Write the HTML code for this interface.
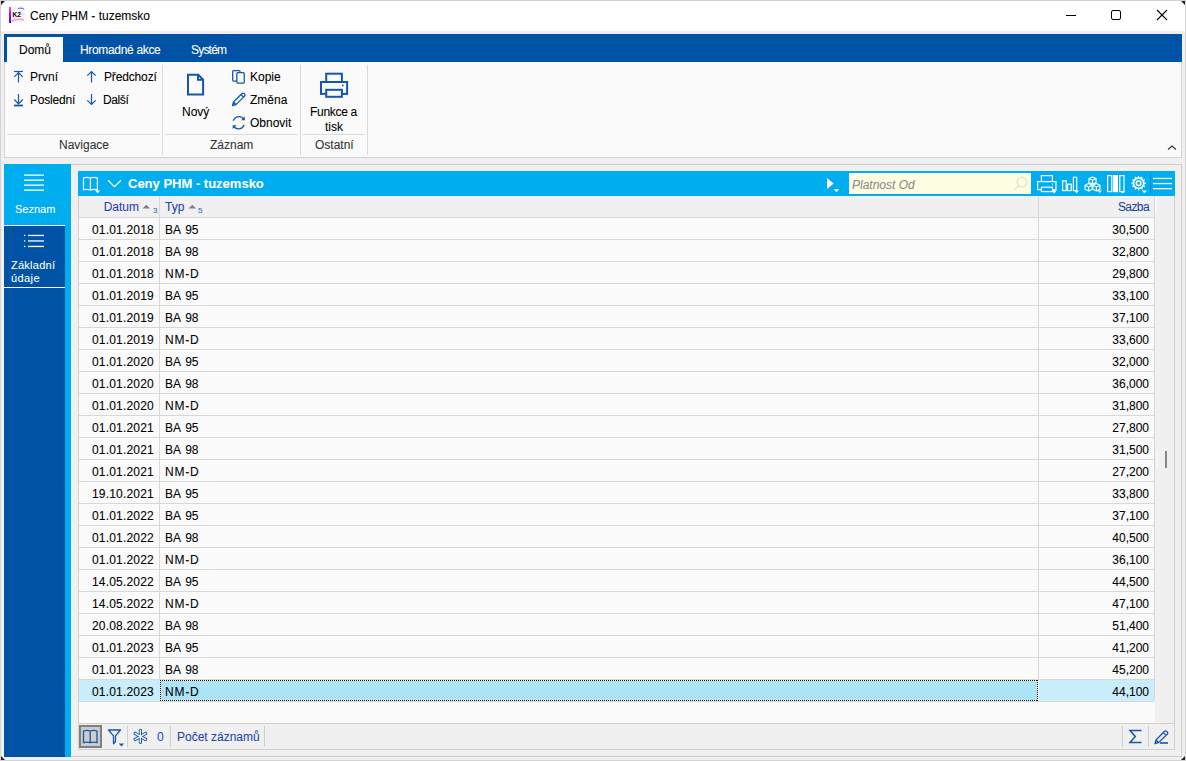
<!DOCTYPE html>
<html><head><meta charset="utf-8"><style>
*{margin:0;padding:0;box-sizing:border-box}
html,body{width:1186px;height:761px;overflow:hidden;background:#f0f0f0;font-family:"Liberation Sans",sans-serif;font-size:12px;color:#000}
.a{position:absolute}
.t{position:absolute;white-space:nowrap;line-height:14px;-webkit-text-stroke:0.08px currentColor}
.r{text-align:right}
svg{position:absolute;overflow:visible}
</style></head><body>
<div class="a" style="left:0px;top:0px;width:1186px;height:761px;background:#f0f0f0;border:1px solid #d2d2d2"></div>
<div class="a" style="left:1px;top:1px;width:1184px;height:30px;background:#fff;border-radius:7px 7px 0 0"></div>
<svg style="left:0px;top:0px" width="8" height="8" viewBox="0 0 8 8"><path d="M1,1 H5 L1,5 Z" fill="#222"/></svg>
<svg style="left:1178px;top:0px" width="8" height="8" viewBox="0 0 8 8"><path d="M7,1 H3 L7,5 Z" fill="#222"/></svg>
<svg style="left:0px;top:753px" width="8" height="8" viewBox="0 0 8 8"><path d="M1,7 V3 L5,7 Z" fill="#222"/></svg>
<svg style="left:1178px;top:753px" width="8" height="8" viewBox="0 0 8 8"><path d="M7,7 V3 L3,7 Z" fill="#222"/></svg>
<svg style="left:9px;top:7px" width="16" height="16" viewBox="0 0 16 16"><defs><linearGradient id="lg" x1="0" y1="0" x2="0" y2="1"><stop offset="0" stop-color="#ff5a7a"/><stop offset="0.5" stop-color="#c000e0"/><stop offset="1" stop-color="#3010ff"/></linearGradient></defs><rect x="0" y="0" width="16" height="16" fill="#f6f2fb"/><rect x="0" y="0" width="2" height="16" fill="url(#lg)"/><path d="M9,1.5 Q12,0.5 15,2" stroke="#8a70f0" stroke-width="1.2" fill="none"/><path d="M3,14 Q8,11 15,13" stroke="#f7a0c0" stroke-width="1.5" fill="none"/><text x="3.5" y="10" font-family="Liberation Sans" font-weight="bold" font-size="6.5" fill="#000">K2</text></svg>
<div class="t" style="left:30px;top:9px;">Ceny PHM - tuzemsko</div>
<div class="a" style="left:1066px;top:15px;width:10px;height:1px;background:#000;"></div>
<div class="a" style="left:1111px;top:10px;width:10px;height:10px;background:transparent;border:1px solid #000;border-radius:2px"></div>
<svg style="left:1157px;top:10px" width="10" height="10" viewBox="0 0 10 10"><path d="M0,0 L10,10 M10,0 L0,10" stroke="#000" stroke-width="1.1"/></svg>
<div class="a" style="left:4px;top:34px;width:1178px;height:28px;background:#0052a4;"></div>
<div class="a" style="left:7px;top:37px;width:56px;height:25px;background:#fafafa;"></div>
<div class="t" style="left:19px;top:43px;">Domů</div>
<div class="t" style="left:80px;top:43px;color:#fff;letter-spacing:-0.33px">Hromadné akce</div>
<div class="t" style="left:191px;top:43px;color:#fff;letter-spacing:-0.8px">Systém</div>
<div class="a" style="left:4px;top:62px;width:1178px;height:96px;background:#fafafa;border:1px solid #d4d4d4;border-top:none"></div>
<div class="a" style="left:162px;top:65px;width:1px;height:90px;background:#d8d8d8;"></div>
<div class="a" style="left:300px;top:65px;width:1px;height:90px;background:#d8d8d8;"></div>
<div class="a" style="left:367px;top:65px;width:1px;height:90px;background:#d8d8d8;"></div>
<div class="a" style="left:7px;top:134px;width:153px;height:1px;background:#dcdcdc;"></div>
<div class="a" style="left:165px;top:134px;width:133px;height:1px;background:#dcdcdc;"></div>
<div class="a" style="left:303px;top:134px;width:62px;height:1px;background:#dcdcdc;"></div>
<div class="t" style="left:59px;top:138px;color:#333">Navigace</div>
<div class="t" style="left:210px;top:138px;color:#333">Záznam</div>
<div class="t" style="left:315px;top:138px;color:#333">Ostatní</div>
<svg style="left:13px;top:70px" width="12" height="14" viewBox="0 0 12 14"><path d="M1,1.5 H10" stroke="#1457ad" stroke-width="1.2"/><path d="M5.5,2.5 V12.5 M1.3,6.8 L5.5,2.6 L9.7,6.8" stroke="#1457ad" stroke-width="1.2" fill="none"/></svg>
<div class="t" style="left:30px;top:70px;">První</div>
<svg style="left:13px;top:93px" width="12" height="14" viewBox="0 0 12 14"><path d="M1,12.5 H10" stroke="#1457ad" stroke-width="1.8"/><path d="M5.5,1 V11 M1.3,6.5 L5.5,10.8 L9.7,6.5" stroke="#1457ad" stroke-width="1.2" fill="none"/></svg>
<div class="t" style="left:30px;top:93px;letter-spacing:-0.2px">Poslední</div>
<svg style="left:86px;top:70px" width="12" height="14" viewBox="0 0 12 14"><path d="M5.5,1.5 V12.5 M1.3,5.7 L5.5,1.5 L9.7,5.7" stroke="#1457ad" stroke-width="1.2" fill="none"/></svg>
<div class="t" style="left:104px;top:70px;letter-spacing:-0.15px">Předchozí</div>
<svg style="left:86px;top:93px" width="12" height="14" viewBox="0 0 12 14"><path d="M5.5,1 V11.5 M1.3,7.3 L5.5,11.5 L9.7,7.3" stroke="#1457ad" stroke-width="1.2" fill="none"/></svg>
<div class="t" style="left:103px;top:93px;letter-spacing:-0.4px">Další</div>
<svg style="left:186px;top:73px" width="20" height="24" viewBox="0 0 20 24"><path d="M2,1.7 H12.3 L17.1,6.6 V21.6 H2 Z M12,1.7 V6.8 H17.1" stroke="#1457ad" stroke-width="2" fill="none" stroke-linejoin="miter"/></svg>
<div class="t" style="left:182px;top:105px;">Nový</div>
<svg style="left:231px;top:69px" width="16" height="16" viewBox="0 0 16 16"><rect x="1.65" y="1.55" width="7.4" height="10.5" rx="1" stroke="#1457ad" stroke-width="1.3" fill="#fafafa"/><rect x="5.85" y="3.55" width="7.4" height="10.5" rx="1" stroke="#1457ad" stroke-width="1.3" fill="#fafafa"/></svg>
<div class="t" style="left:250px;top:70px;">Kopie</div>
<svg style="left:231px;top:92px" width="16" height="16" viewBox="0 0 16 16"><path d="M1.5,13.5 L2.5,10 L11,1.5 Q12,0.7 13,1.5 L13.8,2.3 Q14.5,3.2 13.6,4.1 L5,12.6 Z M10,2.6 L12.6,5.2 M2.5,10 L5,12.6" stroke="#1457ad" stroke-width="1.3" fill="none" stroke-linejoin="round"/></svg>
<div class="t" style="left:250px;top:93px;">Změna</div>
<svg style="left:231px;top:115px" width="16" height="16" viewBox="0 0 16 16"><path d="M2.3,5.8 Q4,1.6 8,1.6 Q11.3,1.6 13,4.3" stroke="#1457ad" stroke-width="1.3" fill="none"/><path d="M13.8,1.5 V5.3 H10 Z" fill="#1457ad"/><path d="M13.2,9.8 Q11.5,13.9 7.5,13.9 Q4.2,13.9 2.5,11.2" stroke="#1457ad" stroke-width="1.3" fill="none"/><path d="M1.7,14 V10.2 H5.5 Z" fill="#1457ad"/></svg>
<div class="t" style="left:250px;top:116px;">Obnovit</div>
<svg style="left:318px;top:71px" width="32" height="28" viewBox="0 0 32 28"><rect x="8.2" y="2.7" width="15.7" height="9" stroke="#1457ad" stroke-width="2" fill="#fafafa"/><rect x="3" y="11" width="26.1" height="11.9" stroke="#1457ad" stroke-width="2" fill="#fafafa"/><rect x="8.2" y="18.8" width="15.7" height="7" stroke="#1457ad" stroke-width="2" fill="#fafafa"/><circle cx="24.8" cy="14.4" r="0.9" fill="#1457ad"/></svg>
<div class="t" style="left:310px;top:105px;letter-spacing:-0.3px">Funkce a</div>
<div class="t" style="left:325px;top:120px;">tisk</div>
<svg style="left:1166px;top:144px" width="12" height="8" viewBox="0 0 12 8"><path d="M2,5.5 L6,2 L10,5.5" stroke="#333" stroke-width="1.1" fill="none"/></svg>
<div class="a" style="left:4px;top:164px;width:67px;height:593px;background:#00adef;"></div>
<div class="a" style="left:4px;top:225px;width:61px;height:532px;background:#0052a4;"></div>
<div class="a" style="left:4px;top:225px;width:61px;height:1px;background:#fff;"></div>
<div class="a" style="left:4px;top:287px;width:61px;height:1px;background:#fff;"></div>
<svg style="left:24px;top:174px" width="20" height="18" viewBox="0 0 20 18"><rect x="0" y="0.5" width="20" height="1.3" fill="#fff"/><rect x="0" y="5.5" width="20" height="1.3" fill="#fff"/><rect x="0" y="10.5" width="20" height="1.3" fill="#fff"/><rect x="0" y="15.5" width="20" height="1.3" fill="#fff"/></svg>
<div class="t" style="left:15px;top:202px;color:#fff;font-size:11px">Seznam</div>
<svg style="left:24px;top:234px" width="20" height="14" viewBox="0 0 20 14"><rect x="0" y="0.8" width="1.3" height="1.3" fill="#fff"/><rect x="0" y="6.3" width="1.3" height="1.3" fill="#fff"/><rect x="0" y="11.8" width="1.3" height="1.3" fill="#fff"/><rect x="4" y="0.8" width="16" height="1.3" fill="#fff"/><rect x="4" y="6.3" width="16" height="1.3" fill="#fff"/><rect x="4" y="11.8" width="16" height="1.3" fill="#fff"/></svg>
<div class="t" style="left:11px;top:258px;color:#fff;font-size:11px;letter-spacing:0.25px">Základní</div>
<div class="t" style="left:11px;top:271px;color:#fff;font-size:11px;letter-spacing:0.4px">údaje</div>
<div class="a" style="left:71px;top:164px;width:1111px;height:593px;background:#f0f0f0;border:1px solid #d0d0d0;border-left:none"></div>
<div class="a" style="left:78px;top:171px;width:1097px;height:25px;background:#00adef;"></div>
<svg style="left:82px;top:176px" width="20" height="19" viewBox="0 0 20 19"><path d="M1.5,2 Q4.8,0.8 8.4,2 Q12,0.8 15.4,2 V13.8 Q12,12.8 8.4,13.8 Q4.8,12.8 1.5,13.8 Z M8.4,2 V14.5" stroke="#fff" stroke-width="1.2" fill="none"/><path d="M13,14.4 H18.3 L15.65,17.2 Z" fill="#fff"/></svg>
<svg style="left:106px;top:178px" width="18" height="12" viewBox="0 0 18 12"><path d="M2,2.3 L8.5,8.6 L15,2.3" stroke="#fff" stroke-width="1.2" fill="none"/></svg>
<div class="t" style="left:128px;top:177px;color:#fff;font-weight:bold;font-size:13px">Ceny PHM - tuzemsko</div>
<svg style="left:825px;top:176px" width="16" height="18" viewBox="0 0 16 18"><path d="M2,2 V13 L8.7,7.5 Z" fill="#fff"/><path d="M8.7,13.3 H14.2 L11.45,16.2 Z" fill="#fff"/></svg>
<div class="a" style="left:849px;top:173px;width:182px;height:21px;background:#fdfde2;"></div>
<div class="t" style="left:852px;top:178px;color:#8a8a8a;font-style:italic">Platnost Od</div>
<svg style="left:1012px;top:175px" width="16" height="16" viewBox="0 0 16 16"><circle cx="10" cy="7.1" r="4.9" stroke="#ddddcc" stroke-width="1.1" fill="none"/><path d="M6.5,10.8 L2.5,14.6" stroke="#ddddcc" stroke-width="1.1"/></svg>
<svg style="left:1036px;top:174px" width="22" height="21" viewBox="0 0 22 21"><rect x="5.4" y="1.6" width="11" height="6" stroke="#fff" stroke-width="1.2" fill="none"/><rect x="1.6" y="7.6" width="18.4" height="8" stroke="#fff" stroke-width="1.2" fill="#00adef"/><rect x="5.4" y="13.2" width="11" height="4.4" stroke="#fff" stroke-width="1.2" fill="#00adef"/><circle cx="16.6" cy="10.2" r="0.6" fill="#fff"/><path d="M15.6,16.3 H20.7 L18.15,19.7 Z" fill="#fff"/></svg>
<svg style="left:1061px;top:175px" width="20" height="20" viewBox="0 0 20 20"><rect x="1.6" y="5.8" width="3.6" height="9.8" stroke="#fff" stroke-width="1.2" fill="none"/><rect x="6.6" y="9.2" width="3.6" height="6.4" stroke="#fff" stroke-width="1.2" fill="none"/><rect x="12.4" y="2.3" width="3.3" height="13.3" stroke="#fff" stroke-width="1.2" fill="none"/><path d="M13.2,15.6 H18.1 L15.65,18.2 Z" fill="#fff"/></svg>
<svg style="left:1083px;top:174px" width="22" height="21" viewBox="0 0 22 21"><path d="M5.6,9.600000000000001 L9.2,11.3 V15.2 L5.6,16.9 L1.9999999999999996,15.2 V11.3 Z M1.9999999999999996,11.3 L5.6,13.0 L9.2,11.3 M5.6,13.0 V16.9" stroke="#fff" stroke-width="1.15" fill="#00adef" stroke-linejoin="round"/><path d="M13.4,9.600000000000001 L17.0,11.3 V15.2 L13.4,16.9 L9.8,15.2 V11.3 Z M9.8,11.3 L13.4,13.0 L17.0,11.3 M13.4,13.0 V16.9" stroke="#fff" stroke-width="1.15" fill="#00adef" stroke-linejoin="round"/><path d="M9.5,2.9000000000000004 L13.1,4.6 V8.5 L9.5,10.2 L5.9,8.5 V4.6 Z M5.9,4.6 L9.5,6.3 L13.1,4.6 M9.5,6.3 V10.2" stroke="#fff" stroke-width="1.15" fill="#00adef" stroke-linejoin="round"/><path d="M14.4,16.5 H19 L16.7,19.1 Z" fill="#fff"/></svg>
<svg style="left:1106px;top:174px" width="22" height="21" viewBox="0 0 22 21"><rect x="1.6" y="1.6" width="4.2" height="16" stroke="#fff" stroke-width="1.2" fill="none"/><rect x="7.1" y="1" width="4.9" height="17.2" fill="#fff"/><rect x="13.8" y="1.6" width="4.2" height="16" stroke="#fff" stroke-width="1.2" fill="none"/><path d="M14,17.5 H19.3 L16.65,19.5 Z" fill="#fff"/></svg>
<svg style="left:1131px;top:176px" width="18" height="18" viewBox="0 0 18 18"><g transform="translate(7.6,7.2)"><rect x="-0.6" y="-7.3" width="1.2" height="2" fill="#fff" transform="rotate(0)"/><rect x="-0.6" y="-7.3" width="1.2" height="2" fill="#fff" transform="rotate(30)"/><rect x="-0.6" y="-7.3" width="1.2" height="2" fill="#fff" transform="rotate(60)"/><rect x="-0.6" y="-7.3" width="1.2" height="2" fill="#fff" transform="rotate(90)"/><rect x="-0.6" y="-7.3" width="1.2" height="2" fill="#fff" transform="rotate(120)"/><rect x="-0.6" y="-7.3" width="1.2" height="2" fill="#fff" transform="rotate(150)"/><rect x="-0.6" y="-7.3" width="1.2" height="2" fill="#fff" transform="rotate(180)"/><rect x="-0.6" y="-7.3" width="1.2" height="2" fill="#fff" transform="rotate(210)"/><rect x="-0.6" y="-7.3" width="1.2" height="2" fill="#fff" transform="rotate(240)"/><rect x="-0.6" y="-7.3" width="1.2" height="2" fill="#fff" transform="rotate(270)"/><rect x="-0.6" y="-7.3" width="1.2" height="2" fill="#fff" transform="rotate(300)"/><rect x="-0.6" y="-7.3" width="1.2" height="2" fill="#fff" transform="rotate(330)"/><circle r="5.2" stroke="#fff" stroke-width="1.8" fill="none"/><circle r="2.3" stroke="#fff" stroke-width="1.5" fill="none"/></g><path d="M10.8,14.5 H16 L13.4,17.2 Z" fill="#fff"/></svg>
<div class="a" style="left:1150px;top:173px;width:1px;height:21px;background:#0a8cc8;"></div>
<svg style="left:1153px;top:177px" width="19" height="13" viewBox="0 0 19 13"><rect x="0" y="0.8" width="19" height="1.3" fill="#fff"/><rect x="0" y="5.9" width="19" height="1.3" fill="#fff"/><rect x="0" y="11" width="19" height="1.3" fill="#fff"/></svg>
<div class="a" style="left:78px;top:196px;width:1097px;height:554px;background:#fafafa;border:1px solid #d0d0d0;border-top:none"></div>
<div class="a" style="left:79px;top:196px;width:1076px;height:22px;background:#f0f0f0;border-bottom:1px solid #d8d8d8"></div>
<div class="a" style="left:1155px;top:196px;width:19px;height:527px;background:#f0f0f0;"></div>
<div class="a" style="left:1155px;top:196px;width:2px;height:17px;background:#fbfbfb;"></div>
<div class="a" style="left:1157px;top:451px;width:1px;height:17px;background:#fbfbfb;"></div>
<div class="a" style="left:1154px;top:196px;width:1px;height:22px;background:#d8d8d8;"></div>
<div class="a" style="left:159px;top:196px;width:1px;height:22px;background:#d8d8d8;"></div>
<div class="a" style="left:1038px;top:196px;width:1px;height:22px;background:#d8d8d8;"></div>
<div class="t" style="left:90px;top:200px;color:#1e44ac;width:49px;text-align:right">Datum</div>
<svg style="left:141px;top:203px" width="12" height="10" viewBox="0 0 12 10"><path d="M1.5,5.6 L5.3,1.8 L9.1,5.6 Z" fill="#808080"/></svg>
<div class="t" style="left:153px;top:204px;color:#3a6fc8;font-size:8px">3</div>
<div class="t" style="left:165px;top:200px;color:#1e44ac">Typ</div>
<svg style="left:187px;top:203px" width="12" height="10" viewBox="0 0 12 10"><path d="M1.5,5.6 L5.3,1.8 L9.1,5.6 Z" fill="#808080"/></svg>
<div class="t" style="left:198px;top:204px;color:#3a6fc8;font-size:8px">5</div>
<div class="t" style="left:1080px;top:200px;color:#1e44ac;width:69px;text-align:right;letter-spacing:-0.6px">Sazba</div>
<div class="a" style="left:1165px;top:451px;width:2px;height:17px;background:#888;"></div>
<div class="a" style="left:79px;top:239px;width:1076px;height:1px;background:#d8d8d8;"></div>
<div class="t" style="left:84px;top:223px;width:70px;text-align:right;letter-spacing:0.2px">01.01.2018</div>
<div class="t" style="left:165px;top:223px;word-spacing:1.5px">BA 95</div>
<div class="t" style="left:1070px;top:223px;width:79px;text-align:right">30,500</div>
<div class="a" style="left:79px;top:261px;width:1076px;height:1px;background:#d8d8d8;"></div>
<div class="t" style="left:84px;top:245px;width:70px;text-align:right;letter-spacing:0.2px">01.01.2018</div>
<div class="t" style="left:165px;top:245px;word-spacing:1.5px">BA 98</div>
<div class="t" style="left:1070px;top:245px;width:79px;text-align:right">32,800</div>
<div class="a" style="left:79px;top:283px;width:1076px;height:1px;background:#d8d8d8;"></div>
<div class="t" style="left:84px;top:267px;width:70px;text-align:right;letter-spacing:0.2px">01.01.2018</div>
<div class="t" style="left:165px;top:267px;letter-spacing:0.8px">NM-D</div>
<div class="t" style="left:1070px;top:267px;width:79px;text-align:right">29,800</div>
<div class="a" style="left:79px;top:305px;width:1076px;height:1px;background:#d8d8d8;"></div>
<div class="t" style="left:84px;top:289px;width:70px;text-align:right;letter-spacing:0.2px">01.01.2019</div>
<div class="t" style="left:165px;top:289px;word-spacing:1.5px">BA 95</div>
<div class="t" style="left:1070px;top:289px;width:79px;text-align:right">33,100</div>
<div class="a" style="left:79px;top:327px;width:1076px;height:1px;background:#d8d8d8;"></div>
<div class="t" style="left:84px;top:311px;width:70px;text-align:right;letter-spacing:0.2px">01.01.2019</div>
<div class="t" style="left:165px;top:311px;word-spacing:1.5px">BA 98</div>
<div class="t" style="left:1070px;top:311px;width:79px;text-align:right">37,100</div>
<div class="a" style="left:79px;top:349px;width:1076px;height:1px;background:#d8d8d8;"></div>
<div class="t" style="left:84px;top:333px;width:70px;text-align:right;letter-spacing:0.2px">01.01.2019</div>
<div class="t" style="left:165px;top:333px;letter-spacing:0.8px">NM-D</div>
<div class="t" style="left:1070px;top:333px;width:79px;text-align:right">33,600</div>
<div class="a" style="left:79px;top:371px;width:1076px;height:1px;background:#d8d8d8;"></div>
<div class="t" style="left:84px;top:355px;width:70px;text-align:right;letter-spacing:0.2px">01.01.2020</div>
<div class="t" style="left:165px;top:355px;word-spacing:1.5px">BA 95</div>
<div class="t" style="left:1070px;top:355px;width:79px;text-align:right">32,000</div>
<div class="a" style="left:79px;top:393px;width:1076px;height:1px;background:#d8d8d8;"></div>
<div class="t" style="left:84px;top:377px;width:70px;text-align:right;letter-spacing:0.2px">01.01.2020</div>
<div class="t" style="left:165px;top:377px;word-spacing:1.5px">BA 98</div>
<div class="t" style="left:1070px;top:377px;width:79px;text-align:right">36,000</div>
<div class="a" style="left:79px;top:415px;width:1076px;height:1px;background:#d8d8d8;"></div>
<div class="t" style="left:84px;top:399px;width:70px;text-align:right;letter-spacing:0.2px">01.01.2020</div>
<div class="t" style="left:165px;top:399px;letter-spacing:0.8px">NM-D</div>
<div class="t" style="left:1070px;top:399px;width:79px;text-align:right">31,800</div>
<div class="a" style="left:79px;top:437px;width:1076px;height:1px;background:#d8d8d8;"></div>
<div class="t" style="left:84px;top:421px;width:70px;text-align:right;letter-spacing:0.2px">01.01.2021</div>
<div class="t" style="left:165px;top:421px;word-spacing:1.5px">BA 95</div>
<div class="t" style="left:1070px;top:421px;width:79px;text-align:right">27,800</div>
<div class="a" style="left:79px;top:459px;width:1076px;height:1px;background:#d8d8d8;"></div>
<div class="t" style="left:84px;top:443px;width:70px;text-align:right;letter-spacing:0.2px">01.01.2021</div>
<div class="t" style="left:165px;top:443px;word-spacing:1.5px">BA 98</div>
<div class="t" style="left:1070px;top:443px;width:79px;text-align:right">31,500</div>
<div class="a" style="left:79px;top:481px;width:1076px;height:1px;background:#d8d8d8;"></div>
<div class="t" style="left:84px;top:465px;width:70px;text-align:right;letter-spacing:0.2px">01.01.2021</div>
<div class="t" style="left:165px;top:465px;letter-spacing:0.8px">NM-D</div>
<div class="t" style="left:1070px;top:465px;width:79px;text-align:right">27,200</div>
<div class="a" style="left:79px;top:503px;width:1076px;height:1px;background:#d8d8d8;"></div>
<div class="t" style="left:84px;top:487px;width:70px;text-align:right;letter-spacing:0.2px">19.10.2021</div>
<div class="t" style="left:165px;top:487px;word-spacing:1.5px">BA 95</div>
<div class="t" style="left:1070px;top:487px;width:79px;text-align:right">33,800</div>
<div class="a" style="left:79px;top:525px;width:1076px;height:1px;background:#d8d8d8;"></div>
<div class="t" style="left:84px;top:509px;width:70px;text-align:right;letter-spacing:0.2px">01.01.2022</div>
<div class="t" style="left:165px;top:509px;word-spacing:1.5px">BA 95</div>
<div class="t" style="left:1070px;top:509px;width:79px;text-align:right">37,100</div>
<div class="a" style="left:79px;top:547px;width:1076px;height:1px;background:#d8d8d8;"></div>
<div class="t" style="left:84px;top:531px;width:70px;text-align:right;letter-spacing:0.2px">01.01.2022</div>
<div class="t" style="left:165px;top:531px;word-spacing:1.5px">BA 98</div>
<div class="t" style="left:1070px;top:531px;width:79px;text-align:right">40,500</div>
<div class="a" style="left:79px;top:569px;width:1076px;height:1px;background:#d8d8d8;"></div>
<div class="t" style="left:84px;top:553px;width:70px;text-align:right;letter-spacing:0.2px">01.01.2022</div>
<div class="t" style="left:165px;top:553px;letter-spacing:0.8px">NM-D</div>
<div class="t" style="left:1070px;top:553px;width:79px;text-align:right">36,100</div>
<div class="a" style="left:79px;top:591px;width:1076px;height:1px;background:#d8d8d8;"></div>
<div class="t" style="left:84px;top:575px;width:70px;text-align:right;letter-spacing:0.2px">14.05.2022</div>
<div class="t" style="left:165px;top:575px;word-spacing:1.5px">BA 95</div>
<div class="t" style="left:1070px;top:575px;width:79px;text-align:right">44,500</div>
<div class="a" style="left:79px;top:613px;width:1076px;height:1px;background:#d8d8d8;"></div>
<div class="t" style="left:84px;top:597px;width:70px;text-align:right;letter-spacing:0.2px">14.05.2022</div>
<div class="t" style="left:165px;top:597px;letter-spacing:0.8px">NM-D</div>
<div class="t" style="left:1070px;top:597px;width:79px;text-align:right">47,100</div>
<div class="a" style="left:79px;top:635px;width:1076px;height:1px;background:#d8d8d8;"></div>
<div class="t" style="left:84px;top:619px;width:70px;text-align:right;letter-spacing:0.2px">20.08.2022</div>
<div class="t" style="left:165px;top:619px;word-spacing:1.5px">BA 98</div>
<div class="t" style="left:1070px;top:619px;width:79px;text-align:right">51,400</div>
<div class="a" style="left:79px;top:657px;width:1076px;height:1px;background:#d8d8d8;"></div>
<div class="t" style="left:84px;top:641px;width:70px;text-align:right;letter-spacing:0.2px">01.01.2023</div>
<div class="t" style="left:165px;top:641px;word-spacing:1.5px">BA 95</div>
<div class="t" style="left:1070px;top:641px;width:79px;text-align:right">41,200</div>
<div class="a" style="left:79px;top:679px;width:1076px;height:1px;background:#d8d8d8;"></div>
<div class="t" style="left:84px;top:663px;width:70px;text-align:right;letter-spacing:0.2px">01.01.2023</div>
<div class="t" style="left:165px;top:663px;word-spacing:1.5px">BA 98</div>
<div class="t" style="left:1070px;top:663px;width:79px;text-align:right">45,200</div>
<div class="a" style="left:79px;top:680px;width:1076px;height:21px;background:#c9edfb;"></div>
<div class="a" style="left:160px;top:680px;width:878px;height:21px;background:#ade5f8;"></div>
<div class="a" style="left:160px;top:680px;width:878px;height:1px;background:repeating-linear-gradient(90deg,#000 0 1px,#fff 1px 2px);"></div>
<div class="a" style="left:160px;top:700px;width:878px;height:1px;background:repeating-linear-gradient(90deg,#000 0 1px,#fff 1px 2px);"></div>
<div class="a" style="left:160px;top:680px;width:1px;height:21px;background:repeating-linear-gradient(180deg,#000 0 1px,#fff 1px 2px);"></div>
<div class="a" style="left:1037px;top:680px;width:1px;height:21px;background:repeating-linear-gradient(180deg,#000 0 1px,#fff 1px 2px);"></div>
<div class="a" style="left:1038px;top:680px;width:1px;height:21px;background:#fafafa;"></div>
<div class="a" style="left:79px;top:701px;width:1076px;height:1px;background:#d8d8d8;"></div>
<div class="t" style="left:84px;top:685px;width:70px;text-align:right;letter-spacing:0.2px">01.01.2023</div>
<div class="t" style="left:165px;top:685px;letter-spacing:0.8px">NM-D</div>
<div class="t" style="left:1070px;top:685px;width:79px;text-align:right">44,100</div>
<div class="a" style="left:159px;top:218px;width:1px;height:462px;background:#d8d8d8;"></div>
<div class="a" style="left:1038px;top:218px;width:1px;height:462px;background:#d8d8d8;"></div>
<div class="a" style="left:1154px;top:218px;width:1px;height:484px;background:#d8d8d8;"></div>
<div class="a" style="left:79px;top:723px;width:1095px;height:27px;background:#f0f0f0;border-top:1px solid #d0d0d0;border-bottom:1px solid #d0d0d0"></div>
<div class="a" style="left:79px;top:725px;width:23px;height:23px;background:#cdcdcd;border:2px solid #808080"></div>
<svg style="left:82px;top:729px" width="17" height="16" viewBox="0 0 17 16"><path d="M1.5,2 Q4.8,0.8 8.2,2 Q11.6,0.8 15,2 V13.6 Q11.6,12.6 8.2,13.6 Q4.8,12.6 1.5,13.6 Z M8.2,2 V14.3" stroke="#1457ad" stroke-width="1.3" fill="none"/></svg>
<svg style="left:106px;top:728px" width="20" height="20" viewBox="0 0 20 20"><path d="M2.5,2 H14.5 L9.5,7.8 V13.5 L7.5,15.8 V7.8 Z" stroke="#1457ad" stroke-width="1.3" fill="none" stroke-linejoin="round"/><path d="M12.8,15.5 H18 L15.4,18.5 Z" fill="#1457ad"/></svg>
<div class="a" style="left:127px;top:726px;width:1px;height:21px;background:#d0d0d0;"></div>
<svg style="left:132px;top:728px" width="18" height="18" viewBox="0 0 18 18"><rect x="-1.1" y="-7" width="2.2" height="14" rx="0.3" stroke="#1457ad" stroke-width="1" fill="#f0f0f0" transform="translate(8.4,8.4) rotate(0)"/><rect x="-1.1" y="-7" width="2.2" height="14" rx="0.3" stroke="#1457ad" stroke-width="1" fill="#f0f0f0" transform="translate(8.4,8.4) rotate(60)"/><rect x="-1.1" y="-7" width="2.2" height="14" rx="0.3" stroke="#1457ad" stroke-width="1" fill="#f0f0f0" transform="translate(8.4,8.4) rotate(120)"/><rect x="-0.6" y="-6.5" width="1.2" height="13" fill="#f0f0f0" transform="translate(8.4,8.4) rotate(0)"/><rect x="-0.6" y="-6.5" width="1.2" height="13" fill="#f0f0f0" transform="translate(8.4,8.4) rotate(60)"/><rect x="-0.6" y="-6.5" width="1.2" height="13" fill="#f0f0f0" transform="translate(8.4,8.4) rotate(120)"/></svg>
<div class="t" style="left:157px;top:730px;color:#1f50b8">0</div>
<div class="a" style="left:170px;top:726px;width:1px;height:21px;background:#d0d0d0;"></div>
<div class="t" style="left:177px;top:730px;color:#1f45b0">Počet záznamů</div>
<div class="a" style="left:264px;top:726px;width:1px;height:21px;background:#d0d0d0;"></div>
<div class="a" style="left:1122px;top:726px;width:1px;height:21px;background:#d0d0d0;"></div>
<svg style="left:1127px;top:728px" width="18" height="18" viewBox="0 0 18 18"><path d="M14.5,2.5 H3 L8.3,8.6 L3,14.5 H14.5" stroke="#1457ad" stroke-width="1.5" fill="none" stroke-linejoin="miter"/></svg>
<div class="a" style="left:1148px;top:726px;width:1px;height:21px;background:#d0d0d0;"></div>
<svg style="left:1153px;top:728px" width="18" height="18" viewBox="0 0 18 18"><path d="M2,15.5 L3,12 L11.6,3.3 Q12.6,2.4 13.6,3.3 L14.4,4.1 Q15.3,5 14.4,6 L5.6,14.6 Z M10.3,4.6 L13.1,7.4 M3,12 L5.6,14.6" stroke="#1457ad" stroke-width="1.3" fill="none" stroke-linejoin="round"/><rect x="7" y="14.2" width="8" height="1.6" fill="#1457ad"/></svg>
</body></html>
